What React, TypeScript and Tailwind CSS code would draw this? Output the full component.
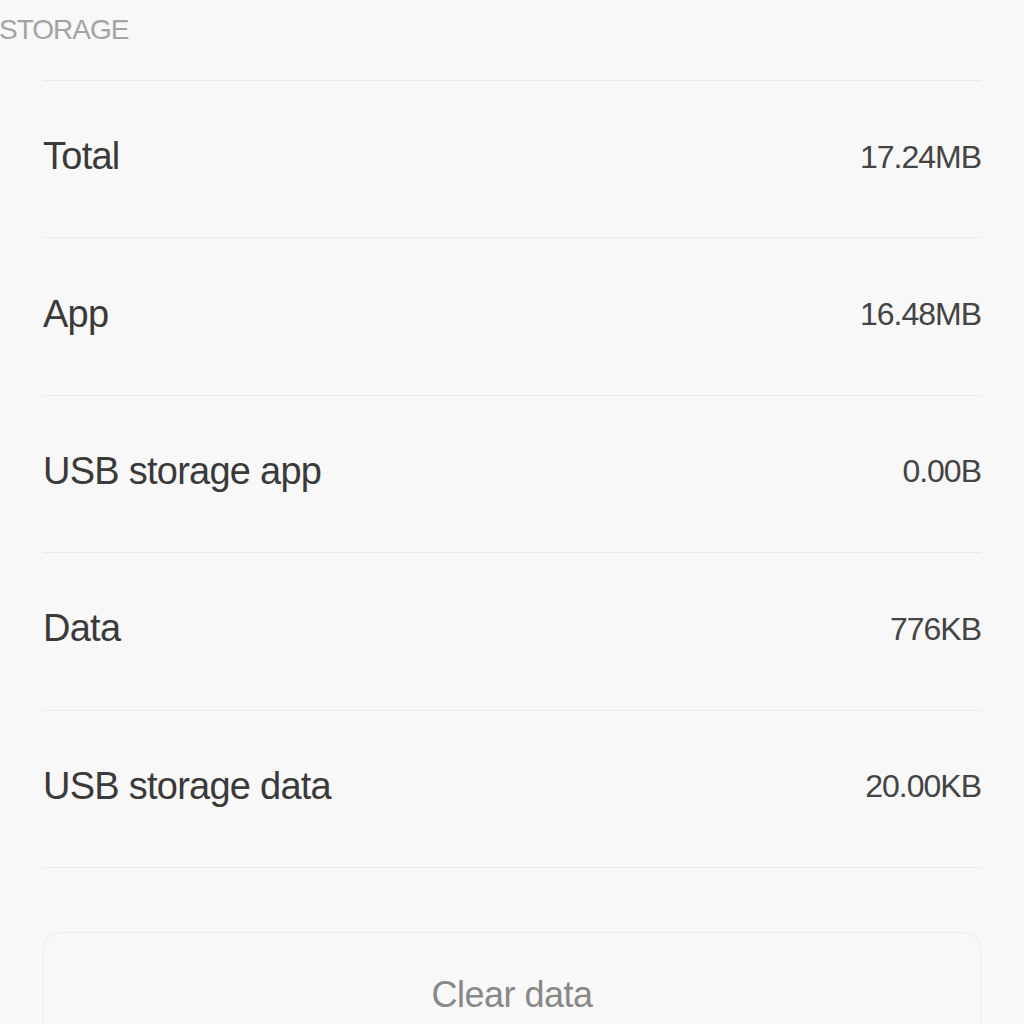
import React from 'react';

const rows = [
  { label: 'Total', value: '17.24MB' },
  { label: 'App', value: '16.48MB' },
  { label: 'USB storage app', value: '0.00B' },
  { label: 'Data', value: '776KB' },
  { label: 'USB storage data', value: '20.00KB' },
];

const App = () => {
  return (
    <div className="min-h-screen w-full bg-[#f8f8f8] overflow-hidden" style={{ fontFamily: '"Liberation Sans", Arial, sans-serif' }}>
      {/* Section header */}
      <div className="h-[80px] pt-[11px]">
        <p className="text-[28px] leading-[38px] tracking-[-1px] text-[#a3a3a3] -ml-[1px]">STORAGE</p>
      </div>

      <div className="px-[43px]">
        <div className="border-t border-[#ebebeb]">
          {rows.map(row => (
            <div key={row.label} className="h-[157.4px] pb-[5px] flex items-center justify-between border-b border-[#ebebeb]">
              <span className="text-[38px] tracking-[-0.75px] text-[#3a3a3a]">{row.label}</span>
              <span className="text-[32px] tracking-[-1px] text-[#444444]">{row.value}</span>
            </div>
          ))}
        </div>

        {/* Clear data button */}
        <div className="mt-[64px] h-[126px] rounded-[16px] border border-[#ececec] bg-[#f8f8f8] flex items-center justify-center">
          <span className="text-[36px] tracking-[-0.5px] text-[#888888]">Clear data</span>
        </div>
      </div>
    </div>
  );
};

export default App;
